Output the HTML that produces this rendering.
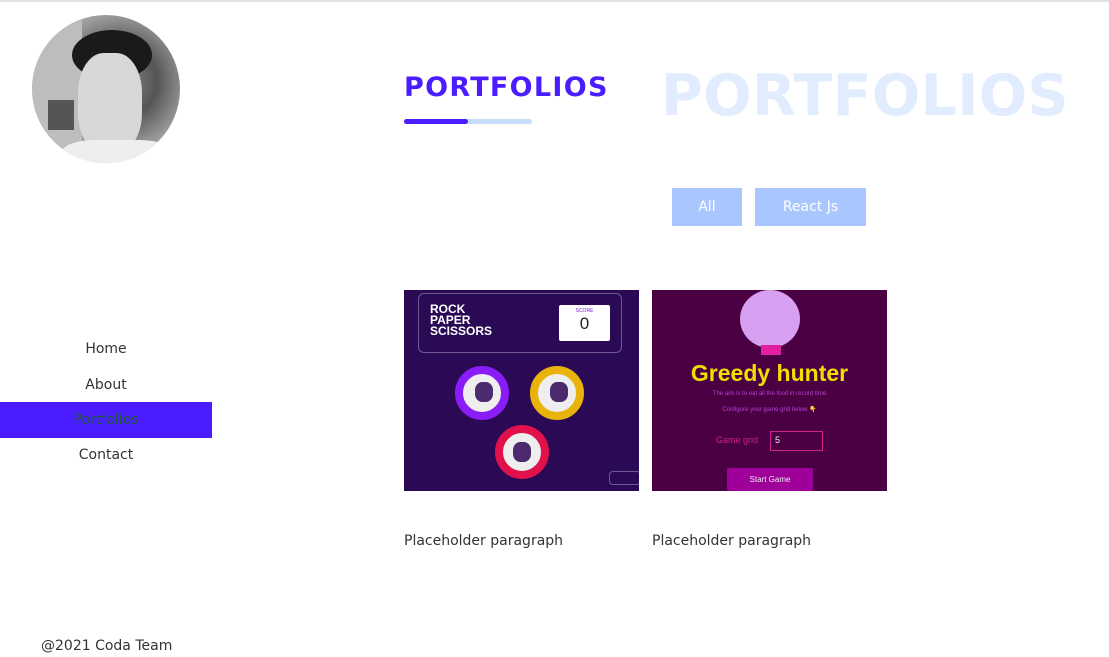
<!DOCTYPE html>
<html><head><meta charset="utf-8"><style>
*{margin:0;padding:0;box-sizing:border-box}
body{width:1109px;height:657px;background:#fff;font-family:"DejaVu Sans","Liberation Sans",sans-serif;position:relative;overflow:hidden;color:#333}
.topline{position:absolute;left:0;top:0;width:1109px;height:2px;background:#e2e2e2}
.avatar{position:absolute;left:32px;top:15px;width:148px;height:148px;border-radius:50%;background:radial-gradient(circle at 60% 45%,#8a8a8a 0,#555 30%,#999 55%,#ccc 80%);overflow:hidden}
.nav a{position:absolute;left:0;width:212px;text-align:center;font-size:14px;color:#333;text-decoration:none;height:36px;line-height:36px}
.nav a.act{background:#4a1cff;color:#225a3a}
.foot{position:absolute;left:41px;top:638px;font-size:14px;color:#333}
.h1{position:absolute;left:404px;top:72px;font:bold 27px "DejaVu Sans",sans-serif;color:#4a1cff;letter-spacing:1.3px}
.bg{position:absolute;left:661px;top:63px;font:bold 57px "DejaVu Sans",sans-serif;color:#e1ecff;letter-spacing:0.3px}
.bar{position:absolute;left:404px;top:119px;width:128px;height:5px;border-radius:3px;background:#c7dbfb}
.bar i{display:block;width:64px;height:5px;border-radius:3px;background:#4a1cff}
.btn{position:absolute;top:188px;height:38px;line-height:38px;background:#aac6ff;color:#fff;font-size:14px;text-align:center}
.card{position:absolute;top:290px;width:235px;height:201px;overflow:hidden}
.cap{position:absolute;top:533px;font-size:14px;color:#333}
</style></head><body>
<div class="topline"></div>
<div class="avatar">
<div style="position:absolute;left:0;top:0;width:50px;height:148px;background:#bdbdbd"></div>
<div style="position:absolute;left:16px;top:85px;width:26px;height:30px;background:#555"></div>
<div style="position:absolute;left:40px;top:15px;width:80px;height:50px;border-radius:50%;background:#1a1a1a"></div>
<div style="position:absolute;left:46px;top:38px;width:64px;height:100px;border-radius:40%;background:#d8d8d8"></div>
<div style="position:absolute;left:30px;top:125px;width:110px;height:40px;border-radius:30%;background:#eee"></div>
</div>
<div class="nav">
<a style="top:331px">Home</a>
<a style="top:367px">About</a>
<a class="act" style="top:402px">Portfolios</a>
<a style="top:437px">Contact</a>
</div>
<div class="foot">@2021 Coda Team</div>
<div class="bg">PORTFOLIOS</div>
<div class="h1">PORTFOLIOS</div>
<div class="bar"><i></i></div>
<div class="btn" style="left:672px;width:70px">All</div>
<div class="btn" style="left:755px;width:111px">React Js</div>
<div class="card" style="left:404px;background:#2a0a55">
<div style="position:absolute;left:14px;top:3px;width:204px;height:60px;border:1.5px solid #6c5a92;border-radius:6px"></div>
<div style="position:absolute;left:26px;top:14px;font:bold 12px/11px 'Liberation Sans',sans-serif;color:#fff">ROCK<br>PAPER<br>SCISSORS</div>
<div style="position:absolute;left:155px;top:15px;width:51px;height:36px;background:#fff;border-radius:2px;text-align:center;font:5px sans-serif;color:#7b20d0;padding-top:3px">SCORE<div style="font:17px 'Liberation Sans';color:#222">0</div></div>
<div style="position:absolute;left:51px;top:76px;width:54px;height:54px;border-radius:50%;background:#eee;border:8px solid #8a1cf7"></div>
<div style="position:absolute;left:126px;top:76px;width:54px;height:54px;border-radius:50%;background:#eee;border:8px solid #e9b30c"></div>
<div style="position:absolute;left:91px;top:135px;width:54px;height:54px;border-radius:50%;background:#eee;border:8px solid #e0114b"></div>
<div style="position:absolute;left:71px;top:92px;width:18px;height:20px;border-radius:40%;background:#4b2a6e"></div>
<div style="position:absolute;left:146px;top:92px;width:18px;height:20px;border-radius:40%;background:#4b2a6e"></div>
<div style="position:absolute;left:109px;top:152px;width:18px;height:20px;border-radius:40%;background:#4b2a6e"></div>
<div style="position:absolute;left:205px;top:181px;width:32px;height:14px;border:1px solid #6c5a92;border-radius:4px"></div>
</div>
<div class="card" style="left:652px;background:#4c0044">
<div style="position:absolute;left:88px;top:0;width:60px;height:58px;border-radius:50%;background:#d8a0f0"></div>
<div style="position:absolute;left:109px;top:55px;width:20px;height:10px;background:#e020a0"></div>
<div style="position:absolute;left:0;top:70px;width:235px;text-align:center;font:bold 23px 'Liberation Sans',sans-serif;color:#f0e000">Greedy hunter</div>
<div style="position:absolute;left:0;top:101px;width:235px;text-align:center;font:6px sans-serif;color:#b040d0">The aim is to eat all the food in record time</div>
<div style="position:absolute;left:0;top:116px;width:235px;text-align:center;font:6px sans-serif;color:#b040d0">Configure your game grid below 👇</div>
<div style="position:absolute;left:64px;top:145px;font:9px sans-serif;color:#d02090">Game grid</div>
<div style="position:absolute;left:118px;top:141px;width:53px;height:20px;border:1.5px solid #d02090;color:#eee;font:9px sans-serif;padding:3px 4px">5</div>
<div style="position:absolute;left:75px;top:178px;width:86px;height:23px;background:#a0009a;border-radius:2px;color:#eee;font:8px sans-serif;text-align:center;line-height:23px">Start Game</div>
</div>
<div class="cap" style="left:404px">Placeholder paragraph</div>
<div class="cap" style="left:652px">Placeholder paragraph</div>
</body></html>
